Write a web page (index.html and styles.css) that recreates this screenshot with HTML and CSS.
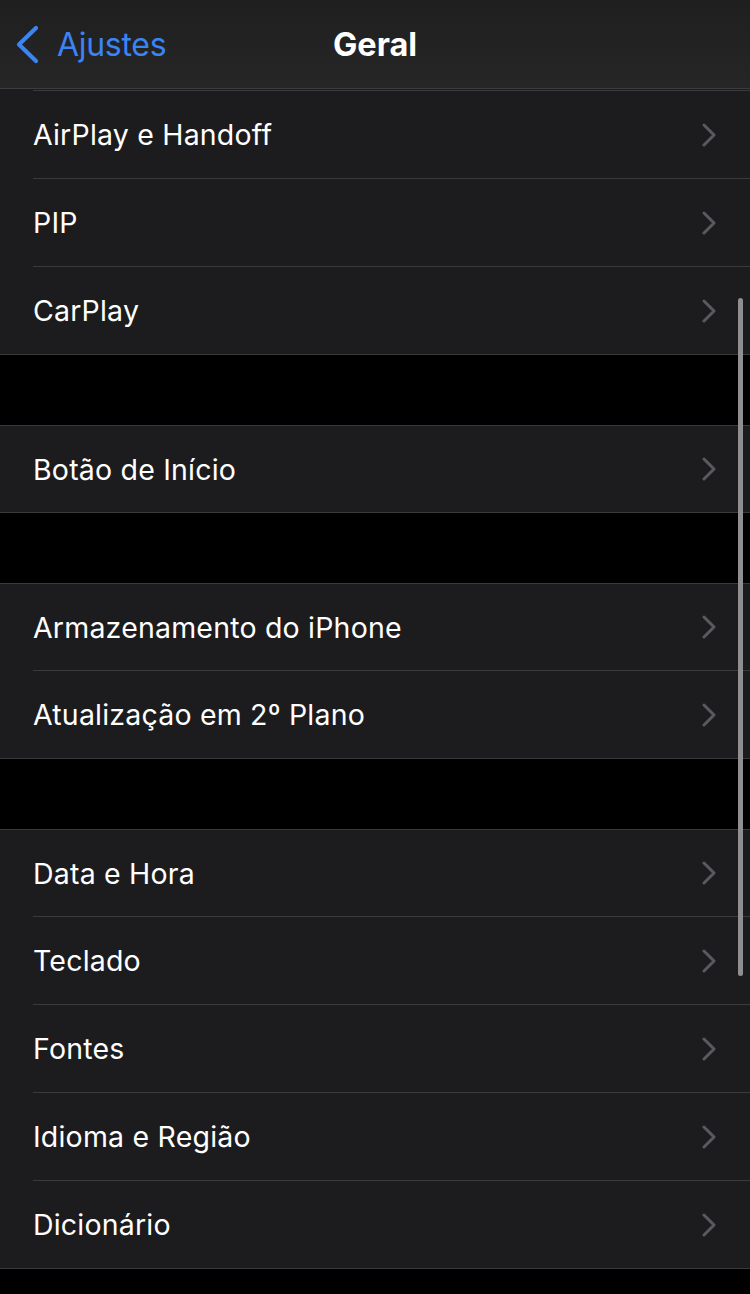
FILE: index.html
```html
<!DOCTYPE html>
<html lang="pt">
<head>
    <meta charset="UTF-8">
    <meta name="viewport" content="width=device-width, initial-scale=1.0">
    <title>Geral</title>
    <link rel="stylesheet" href="styles.css">
</head>
<body>
    <div class="nav">
        <div class="back">
            <svg class="back-icon" width="26" height="40" viewBox="0 0 26 40">
                <polyline points="21,3 4,19.5 21,36" fill="none" stroke="#3a84f4" stroke-width="4.2" stroke-linecap="round" stroke-linejoin="round"/>
            </svg>
            <span>Ajustes</span>
        </div>
        <div class="title">Geral</div>
    </div>

    <div class="list">
        <div class="group">
            <div class="row-clip"></div>
            <div class="row"><div class="row-inner"><span>AirPlay e Handoff</span><svg class="chev" width="14" height="24" viewBox="0 0 14 24"><polyline points="2,2 12,12 2,22" /></svg></div></div>
            <div class="row"><div class="row-inner"><span>PIP</span><svg class="chev" width="14" height="24" viewBox="0 0 14 24"><polyline points="2,2 12,12 2,22" /></svg></div></div>
            <div class="row"><div class="row-inner"><span>CarPlay</span><svg class="chev" width="14" height="24" viewBox="0 0 14 24"><polyline points="2,2 12,12 2,22" /></svg></div></div>
        </div>

        <div class="group">
            <div class="row"><div class="row-inner"><span>Botão de Início</span><svg class="chev" width="14" height="24" viewBox="0 0 14 24"><polyline points="2,2 12,12 2,22" /></svg></div></div>
        </div>

        <div class="group">
            <div class="row"><div class="row-inner"><span>Armazenamento do iPhone</span><svg class="chev" width="14" height="24" viewBox="0 0 14 24"><polyline points="2,2 12,12 2,22" /></svg></div></div>
            <div class="row"><div class="row-inner"><span>Atualização em 2º Plano</span><svg class="chev" width="14" height="24" viewBox="0 0 14 24"><polyline points="2,2 12,12 2,22" /></svg></div></div>
        </div>

        <div class="group">
            <div class="row"><div class="row-inner"><span>Data e Hora</span><svg class="chev" width="14" height="24" viewBox="0 0 14 24"><polyline points="2,2 12,12 2,22" /></svg></div></div>
            <div class="row"><div class="row-inner"><span>Teclado</span><svg class="chev" width="14" height="24" viewBox="0 0 14 24"><polyline points="2,2 12,12 2,22" /></svg></div></div>
            <div class="row"><div class="row-inner"><span>Fontes</span><svg class="chev" width="14" height="24" viewBox="0 0 14 24"><polyline points="2,2 12,12 2,22" /></svg></div></div>
            <div class="row"><div class="row-inner"><span>Idioma e Região</span><svg class="chev" width="14" height="24" viewBox="0 0 14 24"><polyline points="2,2 12,12 2,22" /></svg></div></div>
            <div class="row"><div class="row-inner"><span>Dicionário</span><svg class="chev" width="14" height="24" viewBox="0 0 14 24"><polyline points="2,2 12,12 2,22" /></svg></div></div>
        </div>
    </div>

    <div class="scrollbar"></div>
</body>
</html>
```

FILE: styles.css
```css
body {
    margin: 0;
    background: #000;
    font-family: Inter, "Noto Sans", sans-serif;
    color: #fff;
    width: 750px;
    height: 1294px;
    overflow: hidden;
    position: relative;
}
.nav {
    height: 88px;
    background: linear-gradient(#1f1f1f, #262626);
    border-bottom: 1px solid #3c3c3e;
    position: relative;
    display: flex;
    align-items: center;
}
.back {
    display: flex;
    align-items: center;
    color: #3a84f4;
    font-size: 32px;
    padding-left: 15px;
    letter-spacing: -0.3px;
}
.back-icon {
    margin-right: 16px;
    margin-top: 1px;
}
.title {
    position: absolute;
    left: 0;
    right: 0;
    text-align: center;
    font-size: 32.5px;
    font-weight: 700;
    letter-spacing: 0;
}
.list {
    display: flex;
    flex-direction: column;
    gap: 70px;
}
.group {
    background: #1c1c1e;
    border-bottom: 1px solid #3a3a3c;
    border-top: 1px solid #3a3a3c;
}
.group:first-child {
    border-top: none;
}
.row-clip {
    height: 1px;
    margin-left: 33px;
    border-bottom: 1px solid #3a3a3c;
}
.row {
    padding-left: 33px;
}
.row-inner {
    height: 87px;
    display: flex;
    align-items: center;
    justify-content: space-between;
    padding-right: 34px;
    border-bottom: 1px solid #3a3a3c;
    font-size: 28.5px;
    letter-spacing: 0.2px;
}
.group + .group .row:first-child .row-inner {
    height: 86px;
}
.row:last-child .row-inner {
    border-bottom: none;
}
.chev polyline {
    fill: none;
    stroke: #5a5a5e;
    stroke-width: 3;
    stroke-linecap: round;
    stroke-linejoin: round;
}
.scrollbar {
    position: absolute;
    left: 738px;
    top: 298px;
    width: 5px;
    height: 678px;
    border-radius: 3px;
    background: #8f8f92;
}
```
